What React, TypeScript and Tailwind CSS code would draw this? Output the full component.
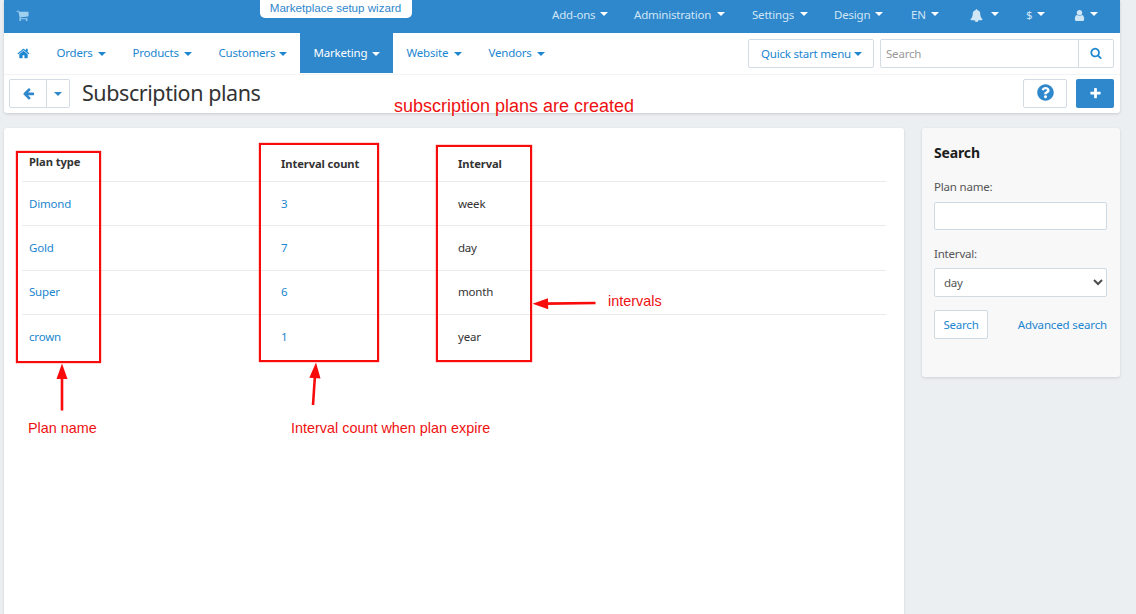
import type { ReactNode } from "react";
import clsx from "clsx";
import { FaQuestionCircle } from "react-icons/fa";

const icons = {
  cart: "M704 1536q0 52-38 90t-90 38-90-38-38-90 38-90 90-38 90 38 38 90zm896 0q0 52-38 90t-90 38-90-38-38-90 38-90 90-38 90 38 38 90zm128-1088v512q0 24-16.5 42.5t-40.5 21.5l-1044 122q13 60 13 70 0 16-24 64h920q26 0 45 19t19 45-19 45-45 19h-1024q-26 0-45-19t-19-45q0-11 8-31.5t16-36 21.5-40 15.5-29.5l-177-823h-204q-26 0-45-19t-19-45 19-45 45-19h256q16 0 28.5 6.5t19.5 15.5 13 24.5 8 26 5.5 29.5 4.5 26h1201q26 0 45 19t19 45z",
  home: "M1472 992v480q0 26-19 45t-45 19h-384v-384h-256v384h-384q-26 0-45-19t-19-45v-480q0-1 .5-3t.5-3l575-474 575 474q1 2 1 6zm223-69l-62 74q-8 9-21 11h-3q-13 0-21-7l-692-577-692 577q-12 8-24 7-13-2-21-11l-62-74q-8-10-7-23.5t11-21.5l719-599q32-26 76-26t76 26l244 204v-195q0-14 9-23t23-9h192q14 0 23 9t9 23v408l219 182q10 8 11 21.5t-7 23.5z",
  back: "M1664 896v128q0 53-32.5 90.5t-84.5 37.5h-704l293 294q38 36 38 90t-38 90l-75 76q-37 37-90 37-52 0-91-37l-651-652q-37-37-37-90 0-52 37-91l651-650q38-38 91-38 52 0 90 38l75 74q38 38 38 91t-38 91l-293 293h704q52 0 84.5 37.5t32.5 90.5z",
  search: "M1216 832q0-185-131.5-316.5t-316.5-131.5-316.5 131.5-131.5 316.5 131.5 316.5 316.5 131.5 316.5-131.5 131.5-316.5zm512 832q0 52-38 90t-90 38q-54 0-90-38l-343-342q-179 124-399 124-143 0-273.5-55.5t-225-150-150-225-55.5-273.5 55.5-273.5 150-225 225-150 273.5-55.5 273.5 55.5 225 150 150 225 55.5 273.5q0 220-124 399l343 343q37 37 37 90z",
  bell: "M912 1696q0-16-16-16-59 0-101.5-42.5t-42.5-101.5q0-16-16-16t-16 16q0 73 51.5 124.5t124.5 51.5q16 0 16-16zm816-288q0 52-38 90t-90 38h-448q0 106-75 181t-181 75-181-75-75-181h-448q-52 0-90-38t-38-90q50-42 91-88t85-119.5 74.5-158.5 50-206 19.5-260q0-152 117-282.5t307-158.5q-8-19-8-39 0-40 28-68t68-28 68 28 28 68q0 20-8 39 190 28 307 158.5t117 282.5q0 139 19.5 260t50 206 74.5 158.5 85 119.5 91 88z",
  user: "M1536 1399q0 109-62.5 187t-150.5 78h-854q-88 0-150.5-78t-62.5-187q0-85 8.5-160.5t31.5-152 58.5-131 94-89 134.5-34.5q131 128 313 128t313-128q76 0 134.5 34.5t94 89 58.5 131 31.5 152 8.5 160.5zm-256-887q0 159-112.5 271.5t-271.5 112.5-271.5-112.5-112.5-271.5 112.5-271.5 271.5-112.5 271.5 112.5 112.5 271.5z",
  plus: "M1600 736v192q0 40-28 68t-68 28h-416v416q0 40-28 68t-68 28h-192q-40 0-68-28t-28-68v-416h-416q-40 0-68-28t-28-68v-192q0-40 28-68t68-28h416v-416q0-40 28-68t68-28h192q40 0 68 28t28 68v416h416q40 0 68 28t28 68z",
};

function Icon({ name, className }: { name: keyof typeof icons; className?: string }) {
  return (
    <svg viewBox="0 0 1792 1792" fill="currentColor" className={clsx("shrink-0", className)}>
      <path d={icons[name]} />
    </svg>
  );
}

function Caret({ className }: { className?: string }) {
  return (
    <svg viewBox="0 0 8 4" fill="currentColor" className={clsx("h-[4px] w-[8px] shrink-0", className)}>
      <path d="M0 0h8L4 4z" />
    </svg>
  );
}

const topItems: { label: ReactNode; box: string }[] = [
  { label: "Add-ons", box: "w-[56px]" },
  { label: "Administration", box: "ml-[26px] w-[91px]" },
  { label: "Settings", box: "ml-[27px] w-[56px]" },
  { label: "Design", box: "ml-[26px] w-[49px]" },
  { label: "EN", box: "ml-[28px] w-[28px]" },
  { label: <Icon name="bell" className="size-[13px]" />, box: "ml-[31px] w-[29px]" },
  { label: "$", box: "ml-[27px] w-[19px]" },
  { label: <Icon name="user" className="size-[13px]" />, box: "ml-[28px] w-[25px]" },
];

const navItems = [
  { label: "Orders", width: "w-[76px]" },
  { label: "Products", width: "w-[86px]" },
  { label: "Customers", width: "w-[95px]" },
  { label: "Marketing", width: "w-[93px]", active: true },
  { label: "Website", width: "w-[82px]" },
  { label: "Vendors", width: "w-[83px]" },
];

const plans = [
  { name: "Dimond", count: 3, interval: "week" },
  { name: "Gold", count: 7, interval: "day" },
  { name: "Super", count: 6, interval: "month" },
  { name: "crown", count: 1, interval: "year" },
];

function TopBar() {
  return (
    <div className="relative flex h-[33px] items-center bg-[#2f87cc] pl-[12px] text-[#cfe6f6]">
      <Icon name="cart" className="-mt-[3px] size-[13px] text-[#9fd0f0]" />
      <div className="absolute left-[256px] top-0 flex h-[18px] w-[152px] justify-center rounded-b-[5px] bg-white pr-px font-['Liberation_Sans',sans-serif] text-[11.6px] leading-[15px] tracking-normal text-[#2f87cc]">
        Marketplace setup wizard
      </div>
      <ul className="ml-[523px] flex h-full items-center pb-[3px]">
        {topItems.map((item, i) => (
          <li key={i} className={clsx("flex items-center justify-between", item.box)}>
            {item.label}
            <Caret className="-mt-[3px] text-white" />
          </li>
        ))}
      </ul>
    </div>
  );
}

function NavBar() {
  return (
    <div className="flex h-[42px] border-b border-[#f1f3f4] text-[#1c86d0]">
      <div className="flex h-10 w-[39px] items-center pl-[13px]">
        <Icon name="home" className="size-[13px]" />
      </div>
      {navItems.map((item) => (
        <a
          key={item.label}
          className={clsx(
            "flex h-10 items-center justify-between pl-[13.5px] pr-[13px] tracking-[-0.2px]",
            item.width,
            item.active && "bg-[#2f87cc] text-white"
          )}
        >
          {item.label}
          <Caret className="mt-px" />
        </a>
      ))}
      <button className="ml-auto mt-[6px] flex h-[29px] w-[126px] items-center justify-between rounded-[2px] border border-[#d3dce4] pl-3 pr-[11px]">
        Quick start menu
        <Caret />
      </button>
      <div className="ml-[6px] mr-[6px] mt-[6px] flex h-[29px] w-[234px] rounded-[2px] border border-[#d3dce4]">
        <input placeholder="Search" className="min-w-0 flex-1 px-[5px] placeholder:text-[#999]" />
        <button className="flex w-[35px] items-center justify-center border-l border-[#d3dce4]">
          <Icon name="search" className="-mt-px size-[12px]" />
        </button>
      </div>
    </div>
  );
}

function TitleBar() {
  return (
    <div className="flex h-[38px] items-start pl-[5px] pr-[6px] pt-[4px] text-[#2f87cc]">
      <div className="flex h-[29px] w-[61px] rounded-[2px] border border-[#d3dce4]">
        <button className="flex flex-1 items-center justify-center">
          <Icon name="back" className="size-[13px]" />
        </button>
        <button className="flex w-[23px] items-center justify-center border-l border-[#d3dce4]">
          <Caret />
        </button>
      </div>
      <h1 className="ml-[12px] whitespace-nowrap text-[21.5px] leading-[27px] tracking-[-0.43px] text-[#333]">
        Subscription plans
      </h1>
      <button className="ml-auto flex h-[29px] w-[44px] items-center justify-center rounded-[2px] border border-[#d3dce4] pb-[2px]">
        <FaQuestionCircle className="size-[17px]" />
      </button>
      <button className="ml-[9px] flex h-[29px] w-[38px] items-center justify-center rounded-[2px] bg-[#2f87cc] text-white">
        <Icon name="plus" className="size-[13px]" />
      </button>
    </div>
  );
}

function PlansTable() {
  return (
    <section className="h-[500px] w-[900px] rounded-t-[3px] bg-white pl-[18px] pr-[18px] pt-[18px] shadow-[0_1px_3px_rgba(0,0,0,0.12)]">
      <table className="w-full table-fixed border-collapse text-left text-[#333]">
        <colgroup>
          <col className="w-[252px]" />
          <col className="w-[177px]" />
          <col />
        </colgroup>
        <thead>
          <tr className="h-[35.5px] border-b border-[#ebebeb] text-[11.2px] tracking-[-0.1px]">
            <th className="pb-[3px] pl-[7px]">Plan type</th>
            <th className="pl-[7px]">Interval count</th>
            <th className="pl-[7px]">Interval</th>
          </tr>
        </thead>
        <tbody>
          {plans.map((plan) => (
            <tr key={plan.name} className="h-[44.4px] border-b border-[#ebebeb] last:border-0">
              <td className="pl-[7px] text-[#1c86d0]">{plan.name}</td>
              <td className="pl-[7px] text-[#1c86d0]">{plan.count}</td>
              <td className="pl-[7px]">{plan.interval}</td>
            </tr>
          ))}
        </tbody>
      </table>
    </section>
  );
}

function SearchPanel() {
  return (
    <aside className="flex h-[249px] w-[198px] flex-col rounded-[3px] bg-[#f8f8f8] pl-[12px] pr-[13px] pt-[15px] text-[#555] shadow-[0_1px_3px_rgba(0,0,0,0.12)]">
      <h2 className="text-[14px] font-bold leading-[20px] tracking-[-0.15px] text-[#1c1c1c]">Search</h2>
      <label className="mt-[16px] leading-[16px]">Plan name:</label>
      <input className="mt-[7px] h-[28px] rounded-[2px] border border-[#d0dae2] bg-white px-2" />
      <label className="mt-[16px] leading-[16px]">Interval:</label>
      <div className="mt-[6px] flex h-[29px] shrink-0 items-center justify-between rounded-[2px] border border-[#d0dae2] bg-white pl-[9px] pr-[3px]">
        day
        <svg viewBox="0 0 10 7" className="h-[7px] w-[10px]" fill="none" stroke="#4d4d4d" strokeWidth="2">
          <path d="M1 1l4 4 4-4" />
        </svg>
      </div>
      <div className="mt-[13px] flex items-center justify-between text-[#1c86d0]">
        <button className="h-[29px] w-[54px] rounded-[2px] border border-[#d0dae2] bg-white">Search</button>
        <a className="tracking-[-0.15px]">Advanced search</a>
      </div>
    </aside>
  );
}

// Red boxes, arrows and notes drawn over the page
function Annotations() {
  return (
    <div className="pointer-events-none absolute inset-0 font-['Liberation_Sans',sans-serif] tracking-normal text-[#ee1111]">
      <div className="absolute left-[16px] top-[151px] h-[212px] w-[85px] border-2 border-[#f90b0b] shadow-[0_0_1px_#f90b0b]" />
      <div className="absolute left-[259px] top-[143px] h-[219px] w-[120px] border-2 border-[#f90b0b] shadow-[0_0_1px_#f90b0b]" />
      <div className="absolute left-[436px] top-[145px] h-[217px] w-[96px] border-2 border-[#f90b0b] shadow-[0_0_1px_#f90b0b]" />
      <svg className="absolute inset-0 h-full w-full" fill="#f90b0b" stroke="#f90b0b">
        <path strokeWidth="2.6" d="M62 410.500V376M313 405l2-30M595.500 303L546 303.600" />
        <path stroke="none" d="M62 363.500l5.500 15.500h-11zM316 362.500l4.500 16-11.200-.7zM532.500 303.800l15.500-5.500.2 11z" />
      </svg>
      <p className="absolute left-[394px] top-[96px] whitespace-nowrap text-[18px] leading-[20px]">
        subscription plans are created
      </p>
      <p className="absolute left-[608px] top-[293px] text-[14.4px] leading-[16px]">intervals</p>
      <p className="absolute left-[28px] top-[420px] whitespace-nowrap text-[14.4px] leading-[16px]">Plan name</p>
      <p className="absolute left-[291px] top-[420px] whitespace-nowrap text-[14.4px] leading-[16px]">
        Interval count when plan expire
      </p>
    </div>
  );
}

export default function App() {
  return (
    <div className="relative h-[614px] w-[1136px] overflow-hidden bg-[#ebeff2] px-[4px] font-['Noto_Sans',sans-serif] text-[11.5px] leading-[16px] tracking-[-0.2px]">
      <header className="w-[1116px] rounded-b-[3px] bg-white shadow-[0_1px_3px_rgba(0,0,0,0.15)]">
        <TopBar />
        <NavBar />
        <TitleBar />
      </header>
      <main className="mt-[15px] flex items-start gap-[18px]">
        <PlansTable />
        <SearchPanel />
      </main>
      <Annotations />
    </div>
  );
}
